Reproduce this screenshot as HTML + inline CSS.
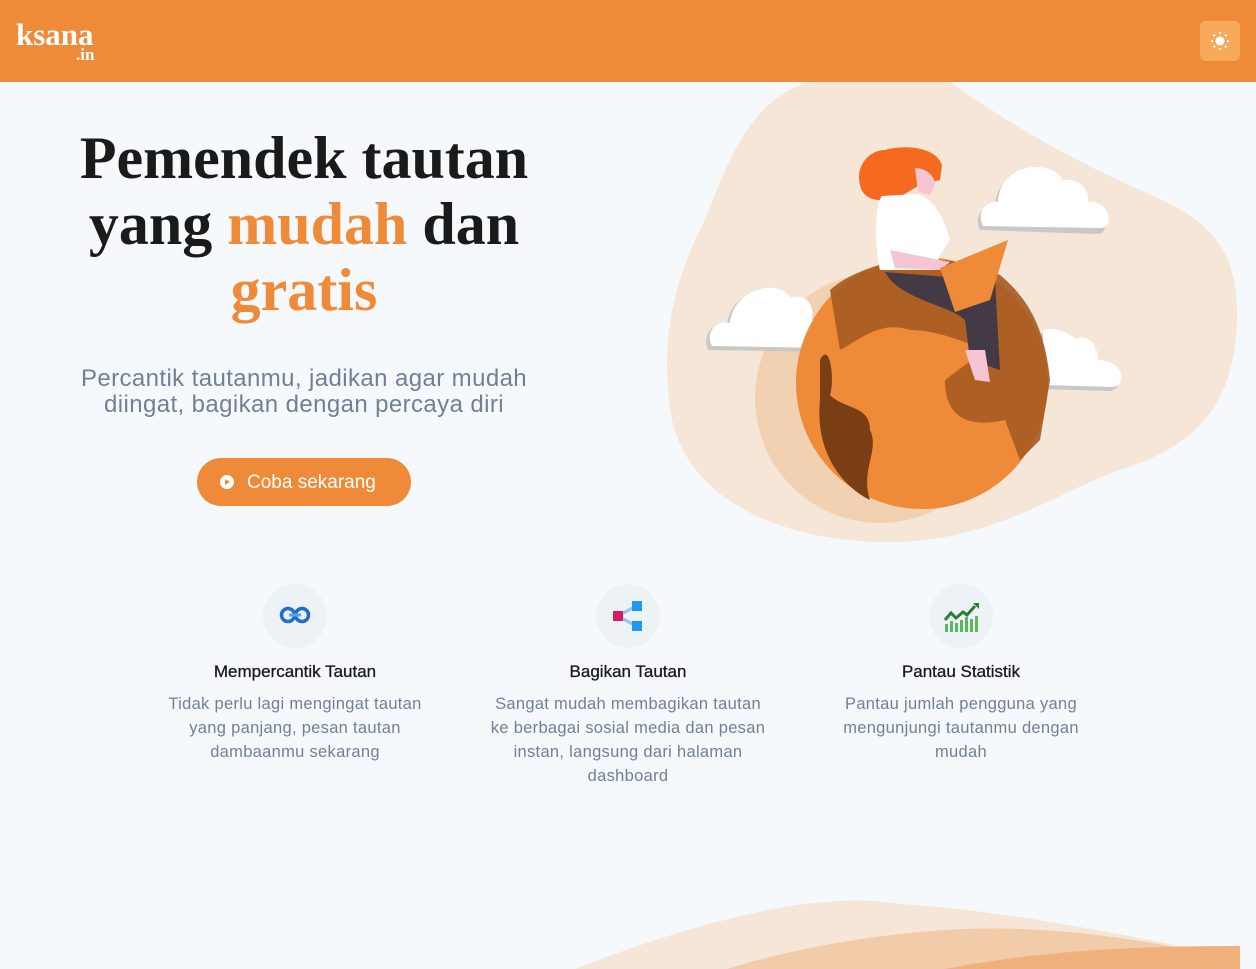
<!DOCTYPE html>
<html><head><meta charset="utf-8"><style>
*{margin:0;padding:0;box-sizing:border-box}
body{width:1256px;height:969px;overflow:hidden;background:#f6f9fc;font-family:"Liberation Sans",sans-serif;position:relative}
header{position:absolute;left:0;top:0;width:1256px;height:82px;background:#ee8a38}
.logo{position:absolute;left:16px;top:20px;color:#fff;font-family:"Liberation Serif",serif;font-weight:bold;font-size:31px;letter-spacing:0px;line-height:30px}
.logo small{position:absolute;left:60px;top:27px;font-size:17px;line-height:16px;letter-spacing:0}
.tog{position:absolute;left:1200px;top:21px;width:40px;height:40px;border-radius:6px;background:#f6aa5a}
h1{position:absolute;left:20px;width:568px;top:125px;text-align:center;font-family:"Liberation Serif",serif;font-weight:bold;font-size:60px;line-height:66px;color:#1a1a1a}
h1 span{color:#ee8a38}
.sub{position:absolute;left:56px;width:496px;top:366px;text-align:center;font-size:24px;line-height:26px;color:#718096;letter-spacing:0.4px}
.btn{position:absolute;left:197px;top:458px;width:214px;height:48px;border-radius:24px;background:#ee8a38;color:#fff;font-size:19px;line-height:50px;padding-left:50px}
.btn i{position:absolute;left:23px;top:17px;width:14px;height:14px;border-radius:50%;background:#fff}
.btn i:after{content:"";position:absolute;left:5px;top:4px;border-left:5px solid #ee8a38;border-top:3px solid transparent;border-bottom:3px solid transparent}
.f{position:absolute;top:584px;width:320px;text-align:center}
.f .c{width:64px;height:64px;border-radius:50%;background:#edf2f7;margin:0 auto;position:relative}
.f h3{margin-top:14px;font-size:17px;font-weight:normal;color:#1a1a1a;line-height:20px;-webkit-text-stroke:0.3px #1a1a1a}
.f p{margin:10px auto 0;width:282px;font-size:16.5px;line-height:24px;color:#718096;letter-spacing:0.3px}
</style></head><body>
<header><div class="logo">ksana<small>.in</small></div>
<div class="tog"><svg width="40" height="40" viewBox="0 0 40 40"><circle cx="20" cy="20" r="4.5" fill="#fff"/><g stroke="#fff" stroke-width="2"><path d="M20 11v2M20 27v2M11 20h2M27 20h2M13.6 13.6l1.4 1.4M25 25l1.4 1.4M13.6 26.4l1.4-1.4M25 15l1.4-1.4"/></g></svg></div></header>
<h1>Pemendek tautan<br>yang <span>mudah</span> dan<br><span>gratis</span></h1>
<div class="sub">Percantik tautanmu, jadikan agar mudah diingat, bagikan dengan percaya diri</div>
<div class="btn"><i></i>Coba sekarang</div>
<svg style="position:absolute;left:0;top:0" width="1256" height="969">
<path d="M810 82 C740 100 720 190 700 230 C670 290 660 350 672 420 C690 500 780 540 880 542 C990 545 1060 490 1120 470 C1200 445 1238 400 1237 310 C1236 240 1200 215 1140 190 C1050 150 990 110 950 82 Z" fill="#f6e6d8"/>
<circle cx="880" cy="398" r="125" fill="#f2d0b2"/>
<g fill="#c8c8c8"><path d="M708 350 C702 335 712 322 727 325 C730 290 777 280 787 300 C802 295 812 305 809 322 C827 320 842 340 827 352 Z"/><path d="M980 230 C972 214 987 204 995 206 C997 164 1052 164 1059 184 C1077 182 1087 194 1085 206 C1107 204 1112 234 1097 234 Z"/><path d="M1040 389 L1040 334 C1060 329 1070 344 1075 342 C1090 339 1095 354 1095 364 C1120 364 1125 389 1110 391 Z"/></g>
<g fill="#fff"><path d="M712 346 C705 333 715 320 730 323 C733 288 780 278 790 298 C805 293 815 303 812 320 C830 318 845 338 830 348 Z"/><path d="M983 226 C975 210 990 200 998 202 C1000 160 1055 160 1062 180 C1080 178 1090 190 1088 202 C1110 200 1115 228 1100 228 Z"/><path d="M1043 385 L1043 330 C1063 325 1073 340 1078 338 C1093 335 1098 350 1098 360 C1123 360 1128 385 1113 387 Z"/></g>
<circle cx="922" cy="383" r="126" fill="#ee8a38"/>
<path d="M830 290 C870 255 950 250 1000 275 C1030 300 1045 330 1050 380 L1040 440 L1020 460 L1005 420 C960 430 945 410 945 380 L985 350 C960 340 935 330 910 330 C880 320 860 340 840 350 Z" fill="#a65a22" opacity=".9"/>
<path d="M820 360 C830 340 835 380 830 395 C845 410 870 405 870 430 C880 450 860 470 870 500 C840 485 815 450 820 400 Z" fill="#7a3e14"/>
<path d="M860 185 C855 165 870 150 885 150 C900 145 935 145 942 165 L940 180 L920 185 C910 190 900 200 880 200 C870 200 862 195 860 185Z" fill="#f56a20"/>
<path d="M915 168 C925 168 935 175 935 185 L930 195 L918 192 Z" fill="#f7c4d2"/>
<path d="M882 196 C874 205 875 250 880 270 L935 270 L940 255 L950 240 C945 220 935 200 918 194 Z" fill="#fff"/>
<path d="M890 250 L950 262 L940 270 L895 268 Z" fill="#f7c4d2"/>
<path d="M885 272 C900 300 950 305 965 320 L970 360 L1000 370 L995 280 L960 278 Z" fill="#433a45"/>
<path d="M965 350 L975 380 L990 382 L985 350 Z" fill="#f7c4d2"/>
<path d="M940 268 L1008 240 L990 300 L955 312 Z" fill="#ee8a38"/>
<path d="M575 969 C700 920 820 890 900 904 C1000 910 1100 930 1240 958 L1240 969Z" fill="#f6e6d8"/>
<path d="M727 969 C820 940 940 925 1020 929 C1100 932 1170 945 1240 960 L1240 969Z" fill="#f2cba8"/>
<path d="M945 969 C1020 955 1100 946 1240 946 L1240 969Z" fill="#f0b07c"/>
</svg>
<div class="f" style="left:135px"><div class="c"><svg width="64" height="64"><g fill="none" stroke="#1e6fd0" stroke-width="3.5"><circle cx="25" cy="31" r="6.5"/><circle cx="39" cy="31" r="6.5"/></g><path d="M26 31h12" stroke="#5aa0f0" stroke-width="3"/></svg></div><h3>Mempercantik Tautan</h3><p>Tidak perlu lagi mengingat tautan yang panjang, pesan tautan dambaanmu sekarang</p></div>
<div class="f" style="left:468px"><div class="c"><svg width="64" height="64"><path d="M22 32L40 22M22 32L40 42" stroke="#90c4f5" stroke-width="3"/><rect x="17" y="27" width="10" height="10" fill="#d81b60"/><rect x="36" y="17" width="10" height="10" fill="#2196f3"/><rect x="36" y="37" width="10" height="10" fill="#2196f3"/></svg></div><h3>Bagikan Tautan</h3><p>Sangat mudah membagikan tautan ke berbagai sosial media dan pesan instan, langsung dari halaman dashboard</p></div>
<div class="f" style="left:801px"><div class="c"><svg width="64" height="64"><g fill="#5cb85c"><rect x="16" y="40" width="3" height="8"/><rect x="21" y="37" width="3" height="11"/><rect x="26" y="39" width="3" height="9"/><rect x="31" y="36" width="3" height="12"/><rect x="36" y="33" width="3" height="15"/><rect x="41" y="35" width="3" height="13"/><rect x="46" y="32" width="3" height="16"/></g><path d="M16 36l6-7 5 5 7-6 4 3 8-9" fill="none" stroke="#2e7d32" stroke-width="3"/><path d="M44 19h6v6z" fill="#2e7d32"/></svg></div><h3>Pantau Statistik</h3><p>Pantau jumlah pengguna yang mengunjungi tautanmu dengan mudah</p></div>
</body></html>
